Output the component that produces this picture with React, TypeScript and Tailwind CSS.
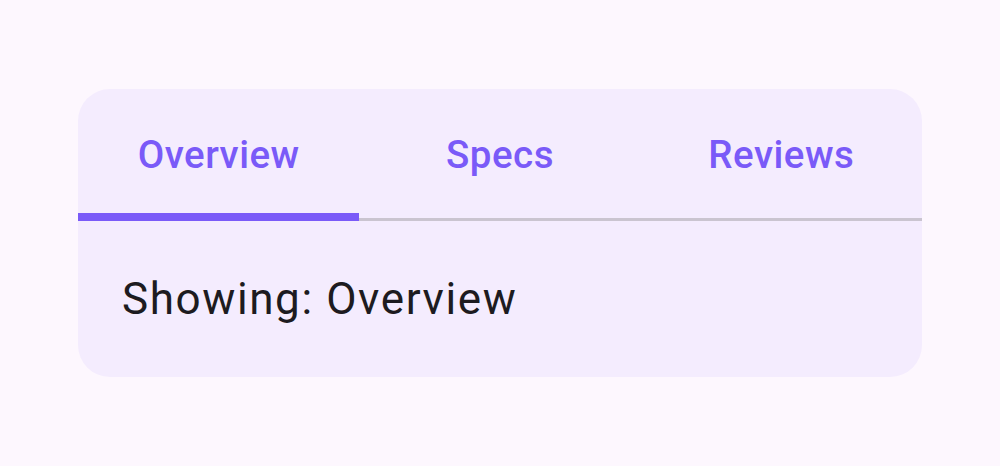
import { useState } from "react"

const tabs = ["Overview", "Specs", "Reviews"]

export default function App() {
    const [active, setActive] = useState(0)

    return (
        <div className="flex min-h-screen items-center justify-center bg-[#fdf7fe] font-['Roboto',sans-serif]">
            <div className="w-[844px] overflow-hidden rounded-[32px] bg-[#f4ecfe]">
                {/* Tab row */}
                <div className="relative flex">
                    {tabs.map((t, i) => (
                        <button
                            key={t}
                            onClick={() => setActive(i)}
                            className="relative flex h-[132px] flex-1 items-center justify-center text-[38.5px] font-medium tracking-[0.5px] text-[#7a5af8]"
                        >
                            {t}
                            {active === i && (
                                <span className="absolute bottom-0 left-0 right-0 z-10 h-[8px] bg-[#7a5af8]" />
                            )}
                        </button>
                    ))}
                    <div className="absolute bottom-0 left-0 right-0 h-[3px] bg-[#cac4d0]" />
                </div>

                {/* Content */}
                <div className="p-[44px] pt-[45px] pb-[45px]">
                    <p className="text-[44px] leading-[66px] tracking-[1.6px] text-[#1d1b20]">
                        Showing: {tabs[active]}
                    </p>
                </div>
            </div>
        </div>
    )
}
